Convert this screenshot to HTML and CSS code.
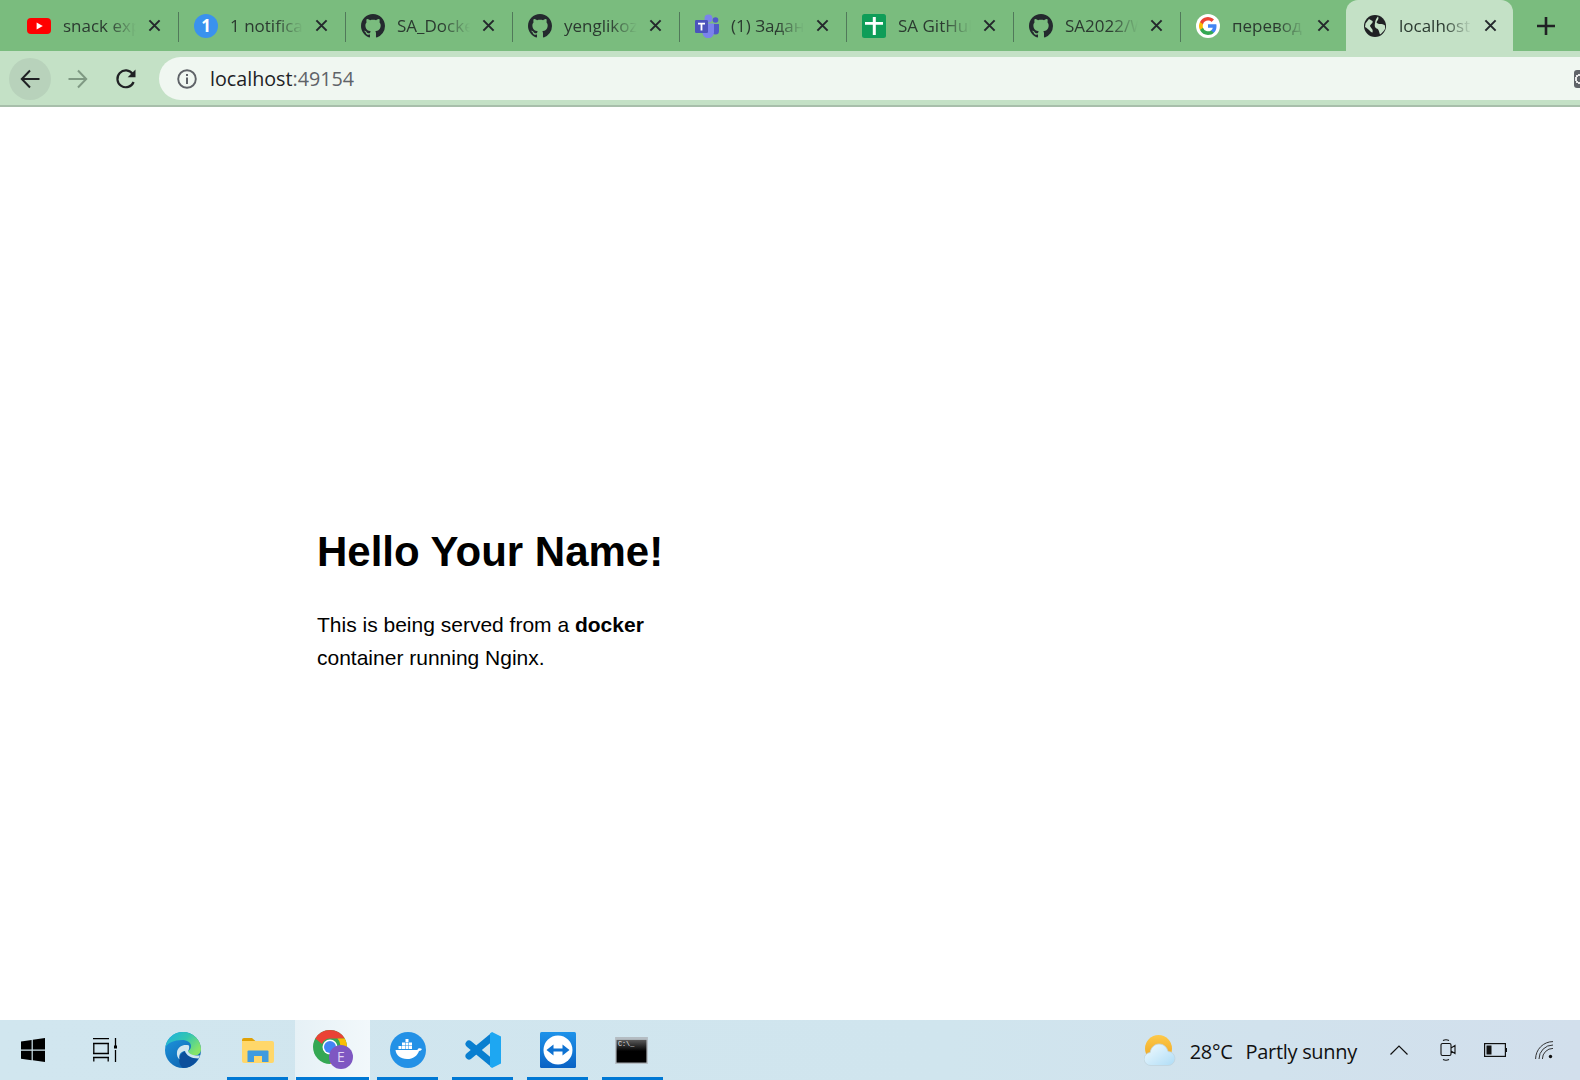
FILE: index.html
```html
<!DOCTYPE html>
<html lang="en">

<head>
    <meta charset="UTF-8">
    <meta name="viewport" content="width=device-width, initial-scale=1.0">
    <title>localhost:49154</title>
    <link rel="stylesheet" href="styles.css">
</head>

<body>

    <!-- Shared icons -->
    <svg class="icon-defs" aria-hidden="true">
        <symbol id="i-github" viewBox="0 0 16 16">
            <path fill="#24292e" d="M8 0C3.58 0 0 3.58 0 8c0 3.54 2.29 6.53 5.47 7.59.4.07.55-.17.55-.38 0-.19-.01-.82-.01-1.49-2.01.37-2.53-.49-2.69-.94-.09-.23-.48-.94-.82-1.13-.28-.15-.68-.52-.01-.53.63-.01 1.08.58 1.23.82.72 1.21 1.87.87 2.33.66.07-.52.28-.87.51-1.07-1.78-.2-3.64-.89-3.64-3.95 0-.87.31-1.59.82-2.15-.08-.2-.36-1.02.08-2.12 0 0 .67-.21 2.2.82.64-.18 1.32-.27 2-.27.68 0 1.36.09 2 .27 1.53-1.04 2.2-.82 2.2-.82.44 1.1.16 1.92.08 2.12.51.56.82 1.27.82 2.15 0 3.07-1.87 3.75-3.65 3.95.29.25.54.73.54 1.48 0 1.07-.01 1.93-.01 2.2 0 .21.15.46.55.38A8.013 8.013 0 0016 8c0-4.42-3.58-8-8-8z" />
        </symbol>
        <symbol id="i-close" viewBox="0 0 14 14">
            <path d="M1.5 1.5l11 11M12.500 1.500l-11 11" stroke="#24282c" stroke-width="2.200" fill="none" />
        </symbol>
    </svg>

    <!-- Tab strip -->
    <div class="tabstrip">
        <div class="tab">
            <svg class="favicon" viewBox="0 0 24 24">
                <rect y="4" width="24" height="16" rx="4" fill="#f00" />
                <path d="M9.600 8.600l6.200 3.400-6.200 3.400z" fill="#fff" />
            </svg>
            <span class="tab-label">snack express</span>
            <svg class="tab-close"><use href="#i-close" /></svg>
        </div>
        <div class="tab">
            <svg class="favicon" viewBox="0 0 24 24">
                <circle cx="12" cy="12" r="12" fill="#3a92ee" />
                <text x="12" y="18" class="favicon-num">1</text>
            </svg>
            <span class="tab-label">1 notification</span>
            <svg class="tab-close"><use href="#i-close" /></svg>
        </div>
        <div class="tab">
            <svg class="favicon"><use href="#i-github" /></svg>
            <span class="tab-label">SA_Docker</span>
            <svg class="tab-close"><use href="#i-close" /></svg>
        </div>
        <div class="tab">
            <svg class="favicon"><use href="#i-github" /></svg>
            <span class="tab-label">yenglikoz</span>
            <svg class="tab-close"><use href="#i-close" /></svg>
        </div>
        <div class="tab">
            <svg class="favicon" viewBox="0 0 24 24">
                <circle cx="13.500" cy="4.500" r="4" fill="#7b83eb" />
                <circle cx="20.500" cy="6" r="2.800" fill="#5059c9" />
                <path d="M17 10h7v7a3.500 3.500 0 01-7 0z" fill="#5059c9" />
                <path d="M7.500 9.500h11.500v9a5.500 5.500 0 01-11.500 0z" fill="#7b83eb" />
                <rect y="6" width="13" height="13" rx="1.200" fill="#4b53bc" />
                <path d="M3 8.800h7v1.700H7.400v6H5.600v-6H3z" fill="#fff" />
            </svg>
            <span class="tab-label">(1) Задание</span>
            <svg class="tab-close"><use href="#i-close" /></svg>
        </div>
        <div class="tab">
            <svg class="favicon" viewBox="0 0 24 24">
                <rect width="24" height="24" rx="2.500" fill="#0f9d58" />
                <path d="M3 8h7.800V3h3v5H21v2.800h-7.200V21h-3V10.800H3z" fill="#fff" />
            </svg>
            <span class="tab-label">SA GitHub</span>
            <svg class="tab-close"><use href="#i-close" /></svg>
        </div>
        <div class="tab">
            <svg class="favicon"><use href="#i-github" /></svg>
            <span class="tab-label">SA2022/Week</span>
            <svg class="tab-close"><use href="#i-close" /></svg>
        </div>
        <div class="tab tab-before-active">
            <svg class="favicon" viewBox="0 0 24 24">
                <circle cx="12" cy="12" r="12" fill="#fff" />
                <path d="M20.500 12.200c0-.7-.05-1.300-.2-1.900H12v3.500h4.800a4.100 4.100 0 01-1.800 2.700v2.300h2.900c1.700-1.600 2.600-3.800 2.600-6.600z" fill="#4285f4" />
                <path d="M12 21c2.400 0 4.500-.8 5.900-2.200L15 16.500a5.400 5.400 0 01-8-2.800H4v2.400A9 9 0 0012 21z" fill="#34a853" />
                <path d="M7 13.700a5.400 5.400 0 010-3.400V7.900H4a9 9 0 000 8.200z" fill="#fbbc05" />
                <path d="M12 6.600c1.400 0 2.600.5 3.500 1.400L18 5.400A9 9 0 004 7.900l3 2.400a5.400 5.400 0 015-3.700z" fill="#ea4335" />
            </svg>
            <span class="tab-label">перевод</span>
            <svg class="tab-close"><use href="#i-close" /></svg>
        </div>
        <div class="tab tab-active">
            <svg class="favicon" viewBox="0 0 24 24">
                <circle cx="12" cy="12" r="11" fill="#202124" />
                <path d="M2.500 9.500L6 5l3.500 2c1 2-2 3-2.500 5 1 2.500 3.500 3 2.500 6.500-2.500-.5-3.500-3.500-7.500-5.500zM15 2.500c1.500 2.500-1 4-1.500 6 2 2.500 5.500.5 8.500 3v3.500c-2 3-3 4-5 5.500-1-2.500-1-5.500-3.500-6-2-1-2-3.500-1.500-5.500.5-3 1-4.500 3-6.500z" fill="#c4e1c6" />
            </svg>
            <span class="tab-label">localhost</span>
            <svg class="tab-close"><use href="#i-close" /></svg>
        </div>
        <svg class="new-tab" viewBox="0 0 18 18">
            <path d="M9 0v18M0 9h18" stroke="#202124" stroke-width="2.600" />
        </svg>
    </div>

    <!-- Toolbar -->
    <div class="toolbar">
        <div class="nav-btn nav-btn-hover">
            <svg viewBox="0 0 20 20" width="20" height="20">
                <path d="M19.500 10H2M10 1.500L1.800 10l8.200 8.500" stroke="#202124" stroke-width="2" fill="none" />
            </svg>
        </div>
        <div class="nav-btn">
            <svg viewBox="0 0 20 20" width="20" height="20">
                <path d="M.5 10H18M10 1.500l8.200 8.500-8.200 8.500" stroke="#7f9983" stroke-width="2" fill="none" />
            </svg>
        </div>
        <div class="nav-btn">
            <svg viewBox="0 0 22 22" width="22" height="22">
                <path d="M18.600 14a8.400 8.400 0 11-.9-8" stroke="#202124" stroke-width="2.200" fill="none" />
                <path d="M20.500 1.500v7.800h-7.800z" fill="#202124" />
            </svg>
        </div>
        <div class="address-bar">
            <svg class="info-icon" viewBox="0 0 20 20">
                <circle cx="10" cy="10" r="8.800" stroke="#5f6368" stroke-width="1.900" fill="none" />
                <path d="M9 8.500h2V15H9zM9 5h2v2H9z" fill="#5f6368" />
            </svg>
            <span class="url">localhost<span class="url-port">:49154</span></span>
            <span class="ext-icon"></span>
        </div>
    </div>

    <!-- Page content -->
    <div class="page">
        <div class="content">
            <h1>Hello Your Name!</h1>
            <p>This is being served from a <b>docker</b> container running Nginx.</p>
        </div>
    </div>

    <!-- Windows taskbar -->
    <div class="taskbar">
        <div class="tb-item tb-start">
            <svg viewBox="0 0 24 24" width="24" height="24">
                <path d="M0 3.400l10.600-1.500v9.600H0zM11.800 1.700L24 0v11.500H11.800zM0 12.700h10.600v9.500L0 20.700zM11.800 12.700H24V24l-12.200-1.700z" fill="#000" />
            </svg>
        </div>
        <div class="tb-item">
            <svg class="tb-taskview" viewBox="0 0 25 24" width="25" height="24">
                <path d="M0 .5h16M0 5.500h16M.8 5.500V15.500M15.200 5.500V15.500M0 15.500h16M0 19.500h16M.8 19.500V23.500M15.200 19.500V23.500M.8 0V.5M15.200 0v.5M22.500 0v8M22.500 12v12" stroke="#000" stroke-width="1.300" fill="none" />
                <rect x="21" y="7.500" width="3" height="3" fill="#000" />
            </svg>
        </div>
        <div class="tb-item">
            <svg viewBox="0 0 36 36" width="36" height="36">
                <defs>
                    <linearGradient id="edge-a" x1="0" y1="0" x2="1" y2=".6">
                        <stop offset="0" stop-color="#1db0e4" />
                        <stop offset=".55" stop-color="#33c6b0" />
                        <stop offset="1" stop-color="#86e468" />
                    </linearGradient>
                    <linearGradient id="edge-b" x1="0" y1="0" x2=".7" y2="1">
                        <stop offset="0" stop-color="#1f9be2" />
                        <stop offset="1" stop-color="#0d61ae" />
                    </linearGradient>
                </defs>
                <circle cx="18" cy="18" r="18" fill="url(#edge-b)" />
                <path d="M.5 15C2 6 9 0 18 0c10 0 18 8 18 17 0 3.500-2 6.500-6 6.500-4 0-7-1.500-7-4.500 2-1 3-3 3-5 0-3.500-4-6-9-6C9 8 3 11 .5 15z" fill="url(#edge-a)" />
                <path d="M20 19c1 4 6 8 13 7.500-3 5.500-8 9.500-15 9.500-5-3.500-6-13 2-17z" fill="#0c4f9c" />
                <path d="M24 13.500C19 12 13 14 12 20c-.5 3 .5 5.500 2.500 7.500-1-4.500 1-8 5.500-8.500 1 4 6 7.500 13.500 7.500l1.500-3c-5 .5-10.500-.5-12-4.500 1-1 1.500-3.500 1-5.500z" fill="#d1e6ef" />
            </svg>
        </div>
        <div class="tb-item tb-open">
            <svg viewBox="0 0 32 26" width="32" height="26">
                <path d="M0 3a2 2 0 012-2h8l4 3.500H0z" fill="#e0a106" />
                <path d="M0 4h30a2 2 0 012 2v18a2 2 0 01-2 2H2a2 2 0 01-2-2z" fill="#ffd76a" />
                <path d="M5.500 14.500a1 1 0 011-1h19a1 1 0 011 1V25h-21z" fill="#3f9be0" />
                <path d="M12 19h8v6h-8z" fill="#ffd76a" />
            </svg>
        </div>
        <div class="tb-item tb-open tb-active">
            <svg viewBox="0 0 40 40" width="40" height="40">
                <circle cx="17" cy="17" r="17" fill="#34a853" />
                <path d="M17 0a17 17 0 0114.700 8.500H17a8.500 8.500 0 00-8 5.500L2.300 8.500A17 17 0 0117 0z" fill="#ea4335" />
                <path d="M31.700 8.500A17 17 0 0117 34l7.400-12.800a8.500 8.500 0 000-12.700z" fill="#fbbc05" />
                <circle cx="17" cy="17" r="7.500" fill="#fff" />
                <circle cx="17" cy="17" r="6" fill="#4285f4" />
                <circle cx="28" cy="27" r="12" fill="#7e57c2" />
                <text x="28" y="32" class="chrome-badge">E</text>
            </svg>
        </div>
        <div class="tb-item tb-open">
            <svg viewBox="0 0 36 36" width="36" height="36">
                <circle cx="18" cy="18" r="18" fill="#2391e6" />
                <path d="M5.500 18h20.500c1.200 0 2-.6 2.300-1.600 1.300-.4 2.700-.2 3.700.6-.6 1.200-1.700 1.900-3 1.900-1.700 4.800-5.700 8.100-12 8.100-6.500 0-10.800-3.500-11.500-9z" fill="#fff" />
                <path d="M8.500 14h3v3h-3zM12 14h3v3h-3zM15.500 14h3v3h-3zM19 14h3v3h-3zM12 10.500h3v3h-3zM15.500 10.500h3v3h-3zM19 10.500h3v3h-3zM15.500 7h3v3h-3z" fill="#fff" />
            </svg>
        </div>
        <div class="tb-item tb-open">
            <svg viewBox="0 0 36 36" width="36" height="36">
                <path d="M4 12l23 19M4 24L27 5" stroke="#0a7fd0" stroke-width="7" stroke-linecap="round" fill="none" />
                <path d="M25 1.500L27 0l9 4.500v27L27 36l-2-1.500z" fill="#1ea7f2" />
            </svg>
        </div>
        <div class="tb-item tb-open">
            <svg viewBox="0 0 36 36" width="36" height="36">
                <defs>
                    <linearGradient id="tv-bg" x1="0" y1="0" x2="0" y2="1">
                        <stop offset="0" stop-color="#1e93ea" />
                        <stop offset="1" stop-color="#0a62c4" />
                    </linearGradient>
                </defs>
                <rect width="36" height="36" rx="1.500" fill="url(#tv-bg)" />
                <circle cx="18" cy="18" r="14.500" fill="#fff" />
                <path d="M6.500 18l7-5.500v4h9v-4l7 5.500-7 5.500v-4h-9v4z" fill="#0e72d2" />
            </svg>
        </div>
        <div class="tb-item tb-open">
            <svg class="tb-cmd" viewBox="0 0 34 28" width="33" height="27">
                <defs>
                    <linearGradient id="cmd-bg" x1="0" y1="0" x2="0" y2="1">
                        <stop offset="0" stop-color="#5a5a5a" />
                        <stop offset=".5" stop-color="#000" />
                    </linearGradient>
                </defs>
                <rect width="34" height="28" fill="#b4bcc2" />
                <rect x="1.500" y="3" width="31" height="23.500" fill="url(#cmd-bg)" />
                <text x="3" y="9.500" class="cmd-text">C:\_</text>
            </svg>
        </div>

        <div class="tray">
            <svg class="weather" viewBox="0 0 32 31" width="32" height="31">
                <defs>
                    <linearGradient id="sun" x1="0" y1="0" x2="0" y2="1">
                        <stop offset="0" stop-color="#fdc94a" />
                        <stop offset="1" stop-color="#eda21c" />
                    </linearGradient>
                    <linearGradient id="cloud" x1="0" y1="0" x2="1" y2="1">
                        <stop offset="0" stop-color="#f2fbff" />
                        <stop offset="1" stop-color="#aedcf6" />
                    </linearGradient>
                </defs>
                <circle cx="14.500" cy="13.500" r="13.500" fill="url(#sun)" />
                <path d="M7 30.500a6.500 6.500 0 01-.8-13C7 12 11 9 15 9c4.500 0 8 3 9 7.500a7 7 0 010 14z" fill="url(#cloud)" stroke="#c2d3dc" stroke-width=".8" />
            </svg>
            <span class="temp">28°C</span>
            <span class="forecast">Partly sunny</span>
            <svg class="tray-chevron" viewBox="0 0 18 10" width="18" height="10">
                <path d="M.5 9.500L9 1l8.500 8.500" stroke="#111" stroke-width="1.200" fill="none" />
            </svg>
            <svg class="tray-cam" viewBox="0 0 16 22" width="16" height="22">
                <path d="M1 6a1.500 1.500 0 011.500-1.500h7A1.500 1.500 0 0111 6v9a1.500 1.500 0 01-1.500 1.500h-7A1.500 1.500 0 011 15zM11 9l4-2.500v8L11 12M3 1.500c2-1 4-1 6 0M3 20.500c2 1 4 1 6 0" stroke="#111" stroke-width="1.100" fill="none" />
            </svg>
            <svg class="tray-battery" viewBox="0 0 23 14" width="23" height="14">
                <rect x=".6" y=".6" width="20.800" height="12.800" stroke="#111" stroke-width="1.200" fill="none" />
                <rect x="2.500" y="2.500" width="5" height="9" fill="#111" />
                <rect x="21.500" y="5" width="1.500" height="4" fill="#111" />
            </svg>
            <svg class="tray-wifi" viewBox="0 0 18 18" width="18" height="18">
                <path d="M.6 18A17.400 17.400 0 0118 .6M4 18A14 14 0 0118 4M7.400 18A10.600 10.600 0 0118 7.400" stroke="#333" stroke-width="1" fill="none" />
                <circle cx="15.500" cy="15.500" r="1.700" fill="#111" />
            </svg>
        </div>
    </div>

</body>

</html>
```

FILE: styles.css
```css
html,
body {
    height: 100%;
}

body {
    margin: 0;
    overflow: hidden;
    display: flex;
    flex-direction: column;
    background-color: #fff;
    font-family: "Open Sans", "Noto Sans", sans-serif;
    color: #202124;
}

.icon-defs {
    display: none;
}

/* Tab strip */
.tabstrip {
    flex: none;
    display: flex;
    align-items: center;
    height: 51px;
    padding-left: 12px;
    background-color: #7abc7e;
}

.tab {
    position: relative;
    display: flex;
    align-items: center;
    box-sizing: border-box;
    width: 167px;
    height: 51px;
    padding-left: 15px;
}

.tab::after {
    content: "";
    position: absolute;
    top: 12px;
    right: 0;
    width: 1px;
    height: 30px;
    background-color: #51795a;
}

.tab-before-active {
    width: 165px;
}

.tab-before-active::after,
.tab-active::after {
    display: none;
}

.tab-active {
    padding-left: 17px;
    background-color: #c4e1c6;
    border-radius: 12px 12px 0 0;
}

.favicon {
    flex: none;
    width: 24px;
    height: 24px;
}

.favicon-num {
    font: bold 17px "Open Sans", sans-serif;
    fill: #fff;
    text-anchor: middle;
}

.tab-label {
    flex: none;
    width: 73px;
    margin-left: 12px;
    overflow: hidden;
    white-space: nowrap;
    font-size: 17px;
    color: #2b3a30;
    -webkit-mask-image: linear-gradient(to right, #000 62%, transparent 100%);
    mask-image: linear-gradient(to right, #000 62%, transparent 100%);
}

.tab-close {
    flex: none;
    width: 13px;
    height: 13px;
    margin-left: 12px;
}

.new-tab {
    width: 18px;
    height: 18px;
    margin-left: 24px;
}

/* Toolbar */
.toolbar {
    flex: none;
    display: flex;
    align-items: center;
    box-sizing: border-box;
    height: 56px;
    padding: 1px 0 0 9px;
    background-color: #c4e1c6;
    border-bottom: 2px solid #a8bfab;
}

.nav-btn {
    flex: none;
    display: flex;
    align-items: center;
    justify-content: center;
    width: 42px;
    height: 42px;
    margin-right: 6px;
    border-radius: 50%;
}

.nav-btn-hover {
    background-color: #b8d2bb;
}

.address-bar {
    flex: 1;
    display: flex;
    align-items: center;
    height: 43px;
    margin-left: 6px;
    padding-left: 18px;
    background-color: #f0f7f1;
    border-radius: 22px 0 0 22px;
}

.info-icon {
    flex: none;
    width: 20px;
    height: 20px;
}

.url {
    margin-left: 13px;
    font-size: 19.7px;
    color: #202124;
}

.url-port {
    color: #5f6368;
}

.ext-icon {
    width: 6px;
    height: 18px;
    margin-left: auto;
    background: radial-gradient(circle at 100% 50%, #5f6368 3px, #e8e8e8 3px, #e8e8e8 5px, #5f6368 5px);
    border-radius: 3px 0 0 3px;
}

/* Page content */
.page {
    flex: 1;
    display: flex;
    align-items: center;
    padding: 71px 0 0 317px;
    font-family: "Liberation Sans", Arial, sans-serif;
    color: #000;
}

.content {
    width: 350px;
}

.content h1 {
    margin: 0 0 29px;
    font-size: 42px;
    line-height: 54px;
}

.content p {
    margin: 0;
    font-size: 21px;
    line-height: 33px;
}

/* Windows taskbar */
.taskbar {
    flex: none;
    display: flex;
    align-items: stretch;
    height: 60px;
    background: linear-gradient(to right, #d1e6ef, #d0e5ee 60%, #d2dfec);
}

.tb-item {
    position: relative;
    flex: none;
    display: flex;
    align-items: center;
    justify-content: center;
    width: 75px;
}

.tb-start {
    width: 65px;
    margin-right: 5px;
}

.tb-taskview {
    margin-right: 5px;
}

.tb-cmd {
    margin-right: 3px;
}

.tb-open::after {
    content: "";
    position: absolute;
    bottom: 0;
    left: 7px;
    right: 7px;
    height: 3px;
    background-color: #0078d4;
}

.tb-active {
    background: linear-gradient(to right, #e6f1f6, #f2f8fb);
}

.tb-active::after {
    left: 1px;
    right: 1px;
}

.chrome-badge {
    font: 14px "Open Sans", sans-serif;
    fill: #e0d4f5;
    text-anchor: middle;
}

.cmd-text {
    font: 7px "Liberation Mono", monospace;
    fill: #e8e8e8;
}

.tray {
    display: flex;
    align-items: center;
    margin-left: auto;
    padding: 3px 27px 0 0;
    font-size: 20px;
    letter-spacing: -0.3px;
    color: #111;
}

.weather {
    margin-top: -3px;
}

.temp {
    margin-left: 14px;
}

.forecast {
    margin-left: 13px;
}

.tray-chevron {
    margin: -3px 0 0 33px;
}

.tray-cam {
    margin: -3px 0 0 32px;
}

.tray-battery {
    margin: -3px 0 0 28px;
}

.tray-wifi {
    margin: -3px 0 0 28px;
}
```
